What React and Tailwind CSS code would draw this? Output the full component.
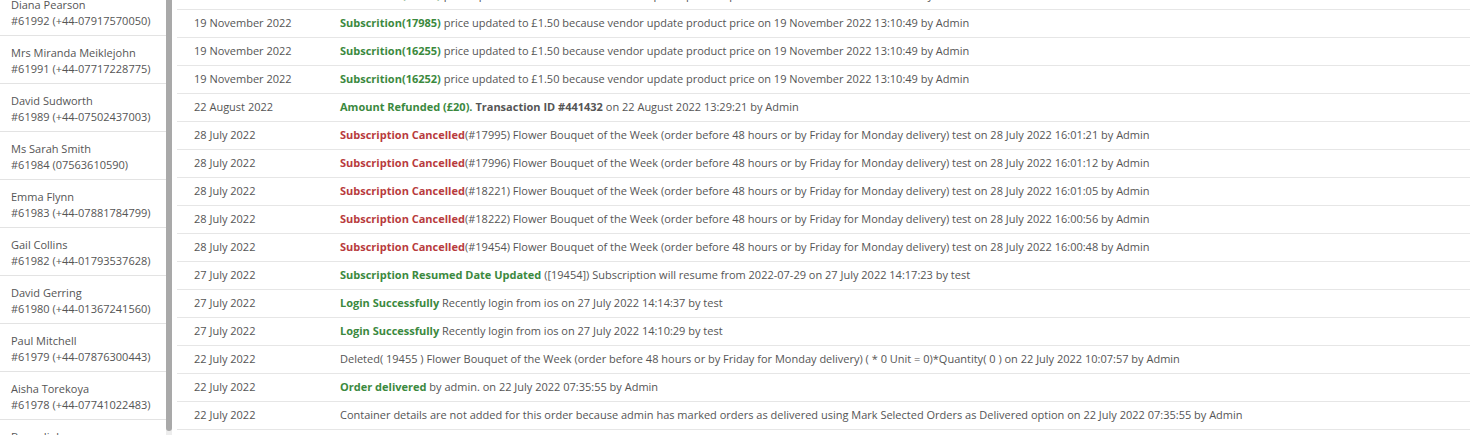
import React from "react";

const customers = [
  ["Diana Pearson", "#61992 (+44-07917570050)"],
  ["Mrs Miranda Meiklejohn", "#61991 (+44-07717228775)"],
  ["David Sudworth", "#61989 (+44-07502437003)"],
  ["Ms Sarah Smith", "#61984 (07563610590)"],
  ["Emma Flynn", "#61983 (+44-07881784799)"],
  ["Gail Collins", "#61982 (+44-01793537628)"],
  ["David Gerring", "#61980 (+44-01367241560)"],
  ["Paul Mitchell", "#61979 (+44-07876300443)"],
  ["Aisha Torekoya", "#61978 (+44-07741022483)"],
  ["Bryan Jinks", "#61977 (+44-07700900123)"],
];

const G = ({ children }) => <span className="font-bold text-[#3b893e]">{children}</span>;
const R = ({ children }) => <span className="font-bold text-[#b83b3d]">{children}</span>;
const B = ({ children }) => <span className="font-bold text-[#555]">{children}</span>;

const cancel = (id, time) => (
  <>
    <R>Subscription Cancelled</R>(#{id}) Flower Bouquet of the Week (order before 48 hours or by Friday for Monday delivery) test on 28 July 2022 {time} by Admin
  </>
);

const sub = (id) => (
  <>
    <G>Subscrition({id})</G> price updated to £1.50 because vendor update product price on 19 November 2022 13:10:49 by Admin
  </>
);

const rows = [
  ["19 November 2022", sub("17990")],
  ["19 November 2022", sub("17985")],
  ["19 November 2022", sub("16255")],
  ["19 November 2022", sub("16252")],
  [
    "22 August 2022",
    <>
      <G>Amount Refunded (£20).</G> <B>Transaction ID #441432</B> on 22 August 2022 13:29:21 by Admin
    </>,
  ],
  ["28 July 2022", cancel("17995", "16:01:21")],
  ["28 July 2022", cancel("17996", "16:01:12")],
  ["28 July 2022", cancel("18221", "16:01:05")],
  ["28 July 2022", cancel("18222", "16:00:56")],
  ["28 July 2022", cancel("19454", "16:00:48")],
  [
    "27 July 2022",
    <>
      <G>Subscription Resumed Date Updated</G> ([19454]) Subscription will resume from 2022-07-29 on 27 July 2022 14:17:23 by test
    </>,
  ],
  [
    "27 July 2022",
    <>
      <G>Login Successfully</G> Recently login from ios on 27 July 2022 14:14:37 by test
    </>,
  ],
  [
    "27 July 2022",
    <>
      <G>Login Successfully</G> Recently login from ios on 27 July 2022 14:10:29 by test
    </>,
  ],
  [
    "22 July 2022",
    <>Deleted( 19455 ) Flower Bouquet of the Week (order before 48 hours or by Friday for Monday delivery) ( * 0 Unit = 0)*Quantity( 0 ) on 22 July 2022 10:07:57 by Admin</>,
  ],
  [
    "22 July 2022",
    <>
      <G>Order delivered</G> by admin. on 22 July 2022 07:35:55 by Admin
    </>,
  ],
  [
    "22 July 2022",
    <>Container details are not added for this order because admin has marked orders as delivered using Mark Selected Orders as Delivered option on 22 July 2022 07:35:55 by Admin</>,
  ],
  ["21 July 2022", <>Order placed on 21 July 2022 09:12:40 by Admin</>],
];

export default function App() {
  return (
    <div
      className="flex h-[435px] w-[1470px] overflow-hidden bg-white text-[11px] text-[#555]"
      style={{ fontFamily: '"Open Sans", "Noto Sans", sans-serif' }}
    >
      <div className="w-[166px] shrink-0 overflow-hidden">
        <div className="mt-[-12px]">
          {customers.map(([name, phone]) => (
            <div key={phone} className="border-b border-[#e3e3e3] pl-[11px] pt-[9px] pb-[6px] leading-[16px]">
              <div className="whitespace-nowrap">{name}</div>
              <div className="whitespace-nowrap">{phone}</div>
            </div>
          ))}
        </div>
      </div>
      <div className="flex w-[6px] shrink-0 flex-col bg-[#ededed]">
        <div className="h-[431px] rounded-b-[3px] bg-[#a9a9a9]" />
      </div>
      <div className="ml-[5px] flex-1 overflow-hidden">
        <div className="mt-[-18px]">
          {rows.map(([date, msg], i) => (
            <div key={i} className="flex h-[28px] items-center border-b border-[#e6e6e6] whitespace-nowrap">
              <div className="w-[163px] shrink-0 pl-[17px]">{date}</div>
              <div className="flex-1">{msg}</div>
            </div>
          ))}
        </div>
      </div>
    </div>
  );
}
